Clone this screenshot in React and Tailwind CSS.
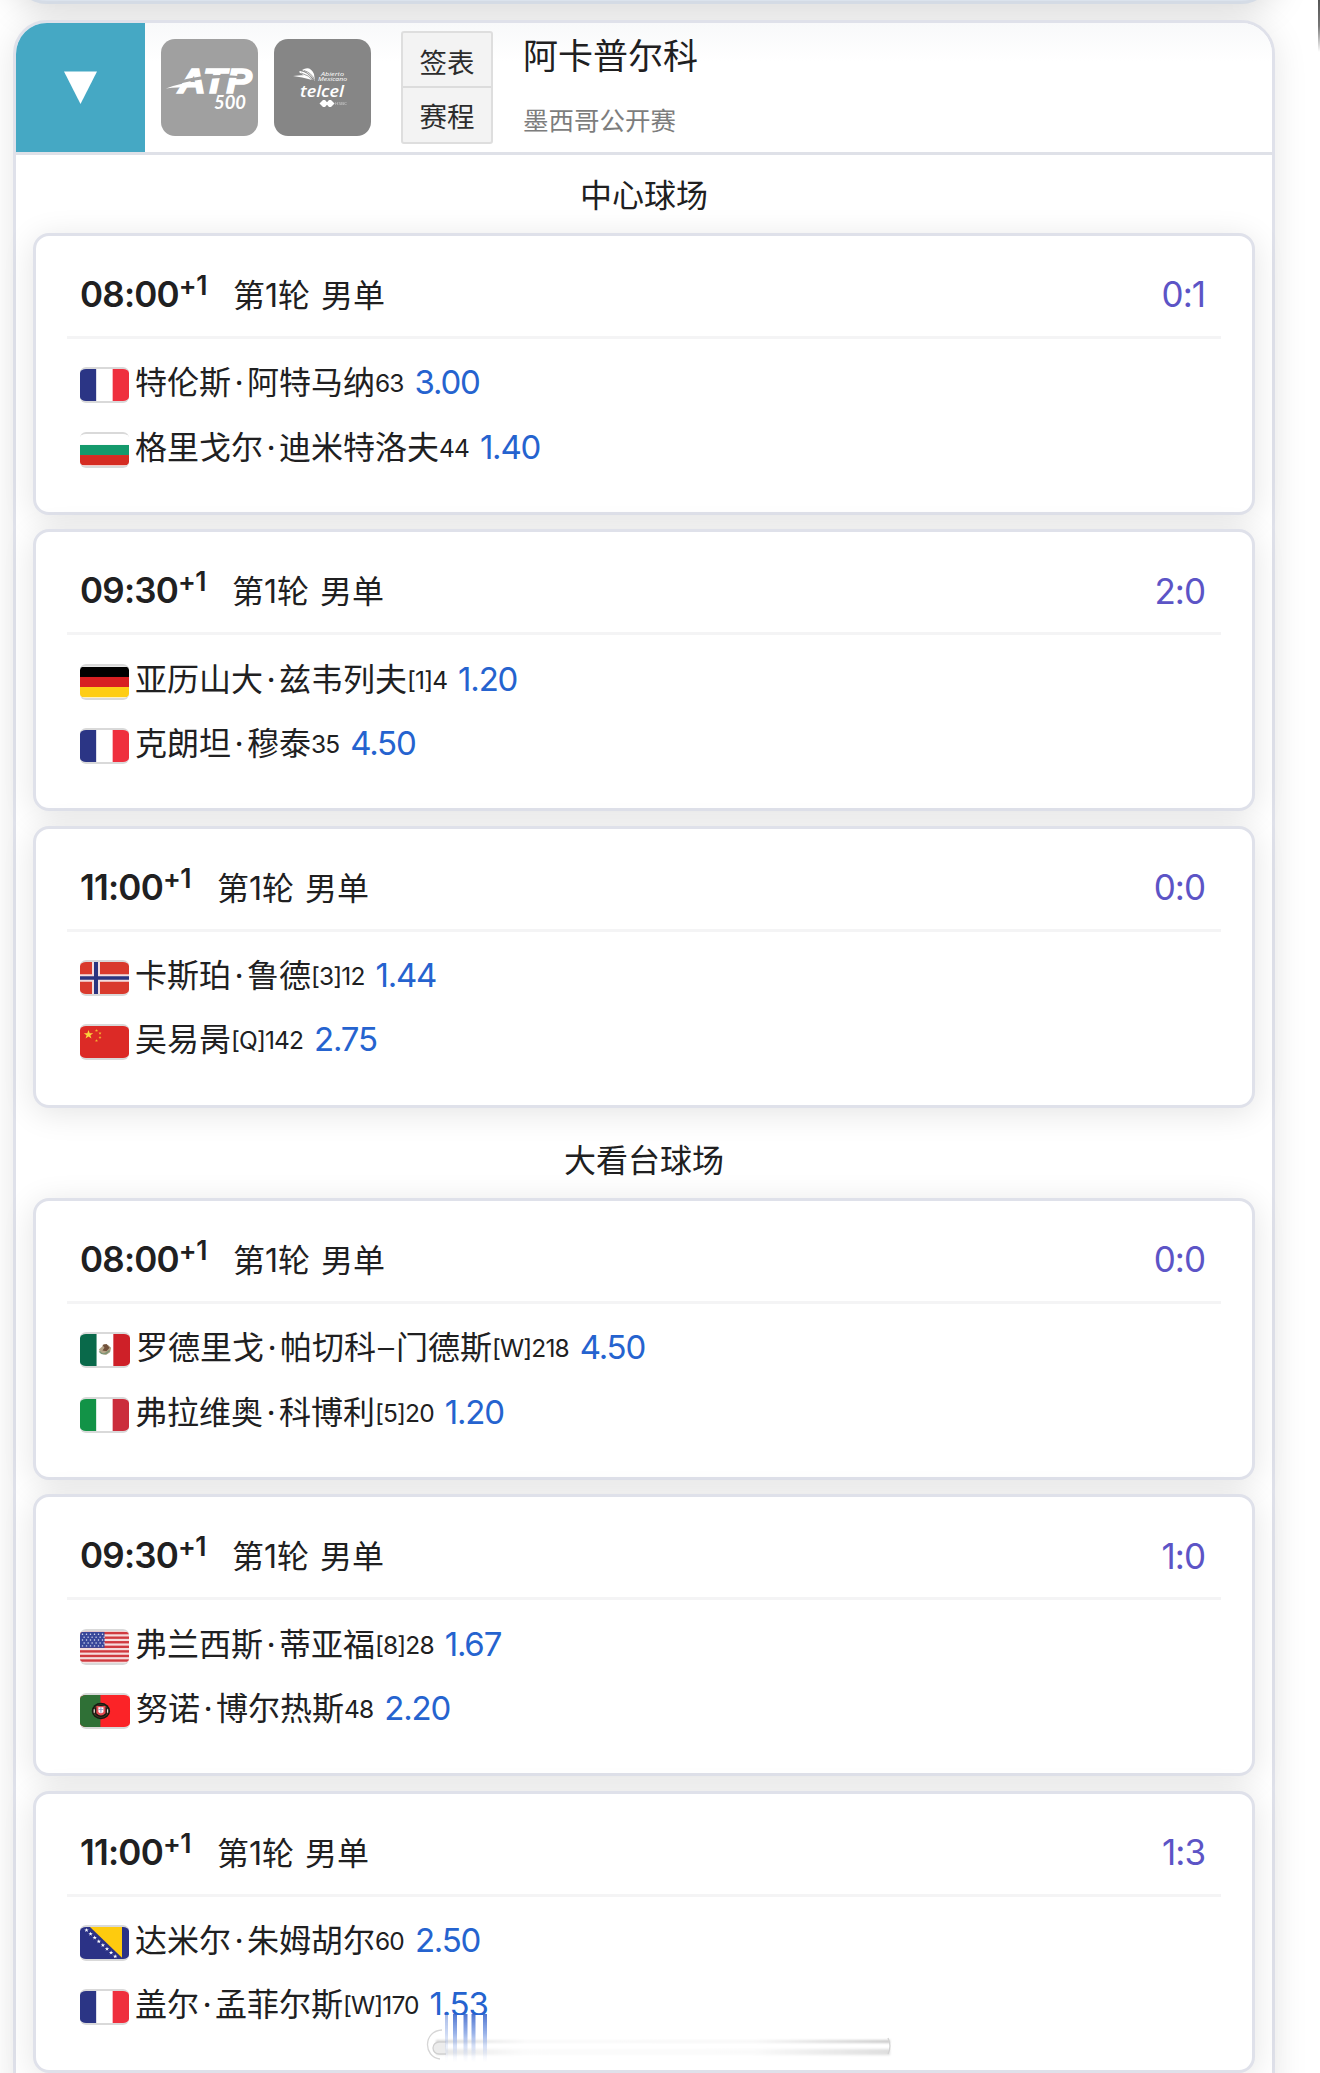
import React from 'react';

const courts = [
  {
    name: '中心球场',
    matches: [
      {
        time: '08:00', score: '0:1',
        players: [
          { flag: 'fr', name: '特伦斯·阿特马纳', rank: '63', odds: '3.00' },
          { flag: 'bg', name: '格里戈尔·迪米特洛夫', rank: '44', odds: '1.40' },
        ],
      },
      {
        time: '09:30', score: '2:0',
        players: [
          { flag: 'de', name: '亚历山大·兹韦列夫', rank: '[1]4', odds: '1.20' },
          { flag: 'fr', name: '克朗坦·穆泰', rank: '35', odds: '4.50' },
        ],
      },
      {
        time: '11:00', score: '0:0',
        players: [
          { flag: 'no', name: '卡斯珀·鲁德', rank: '[3]12', odds: '1.44' },
          { flag: 'cn', name: '吴易昺', rank: '[Q]142', odds: '2.75' },
        ],
      },
    ],
  },
  {
    name: '大看台球场',
    matches: [
      {
        time: '08:00', score: '0:0',
        players: [
          { flag: 'mx', name: '罗德里戈·帕切科–门德斯', rank: '[W]218', odds: '4.50' },
          { flag: 'it', name: '弗拉维奥·科博利', rank: '[5]20', odds: '1.20' },
        ],
      },
      {
        time: '09:30', score: '1:0',
        players: [
          { flag: 'us', name: '弗兰西斯·蒂亚福', rank: '[8]28', odds: '1.67' },
          { flag: 'pt', name: '努诺·博尔热斯', rank: '48', odds: '2.20' },
        ],
      },
      {
        time: '11:00', score: '1:3',
        players: [
          { flag: 'ba', name: '达米尔·朱姆胡尔', rank: '60', odds: '2.50' },
          { flag: 'fr', name: '盖尔·孟菲尔斯', rank: '[W]170', odds: '1.53' },
        ],
      },
    ],
  },
];

const star = '0,-1 0.24,-0.31 0.95,-0.31 0.38,0.12 0.59,0.81 0,0.4 -0.59,0.81 -0.38,0.12 -0.95,-0.31 -0.24,-0.31';

const Star = ({ x, y, r, fill }) => (
  <polygon points={star} fill={fill} transform={`translate(${x} ${y}) scale(${r})`} />
);

const VerticalBands = ({ colors }) => (
  <>
    {colors.map((c, i) => <rect key={i} x={i * 16.33} width="16.5" height="35" fill={c} />)}
  </>
);

const HorizontalBands = ({ colors }) => (
  <>
    {colors.map((c, i) => <rect key={i} y={1 + i * 11} width="49" height="11.2" fill={c} />)}
  </>
);

const flags = {
  fr: <VerticalBands colors={['#2b3585', '#ffffff', '#ef2f3e']} />,
  it: <VerticalBands colors={['#129347', '#ffffff', '#cb2d3c']} />,
  bg: <HorizontalBands colors={['#ffffff', '#149a6c', '#d52c22']} />,
  de: <HorizontalBands colors={['#000000', '#d81f22', '#fecd14']} />,
  mx: (
    <>
      <VerticalBands colors={['#09694a', '#ffffff', '#ce2028']} />
      <path d="M18.5 17l3-3 2-3 4 1 3 3-1 5-4 3-5-2z" fill="#b5a487" />
      <path d="M22 12l4-1 3 4-3 4-4-1 2-3z" fill="#70503a" />
      <path d="M19 19q4 6 10-1" fill="none" stroke="#7c9474" strokeWidth="1.5" />
    </>
  ),
  no: (
    <>
      <rect width="49" height="35" fill="#d93a2d" />
      <path d="M16 0v35M0 17.5h49" stroke="#f3dede" strokeWidth="8" />
      <path d="M16 0v35M0 17.5h49" stroke="#2a3580" strokeWidth="4" />
    </>
  ),
  cn: (
    <>
      <rect width="49" height="35" fill="#dc2a26" />
      <Star x={8.5} y={9.5} r={5} fill="#fbd53c" />
      <Star x={16.5} y={5} r={1.7} fill="#f7b731" />
      <Star x={20} y={8} r={1.7} fill="#f7b731" />
      <Star x={20} y={12.5} r={1.7} fill="#f7b731" />
      <Star x={16.5} y={16} r={1.7} fill="#f7b731" />
    </>
  ),
  us: (
    <>
      <rect width="49" height="35" fill="#f5dddd" />
      {[0, 1, 2, 3, 4, 5, 6].map((i) => (
        <rect key={i} y={1 + i * 5} width="49" height="2.6" fill="#d03a3f" />
      ))}
      <rect y="1" width="24.5" height="17.5" fill="#39479a" />
      {[0, 1, 2, 3, 4].map((row) =>
        [0, 1, 2, 3, 4, 5].map((col) => (
          <circle key={`${row}-${col}`} cx={2.5 + col * 4 + (row % 2) * 1.6} cy={3.5 + row * 3.2} r="0.75" fill="#dfe3f5" />
        ))
      )}
    </>
  ),
  pt: (
    <>
      <rect width="50" height="35" fill="#fb2327" />
      <rect width="20" height="35" fill="#2f7036" />
      <circle cx="20.5" cy="17.5" r="9" fill="#151b12" />
      <circle cx="20.5" cy="17.5" r="7" fill="none" stroke="#4a3a28" />
      <path d="M16 12h9v8q-4.5 5-9 0z" fill="#e24a50" />
      <path d="M18 13.5h5v5q-2.5 3-5 0z" fill="#ffffff" />
      <path d="M20.5 13.5v6M18 16h5" stroke="#8a94c4" />
      <path d="M14 15.5v4M27 15.5v4" stroke="#e8d9d6" strokeWidth="1.2" />
    </>
  ),
  ba: (
    <>
      <rect width="49" height="35" fill="#2b3286" />
      <path d="M10 0H42V33.5z" fill="#fecb0e" />
      {[0, 1, 2, 3, 4, 5, 6, 7].map((i) => (
        <Star key={i} x={6.5 + i * 4.1} y={3.5 + i * 4.1} r={2.3} fill="#ffffff" />
      ))}
    </>
  ),
};

const Flag = ({ code }) => (
  <svg
    viewBox="0 0 49 35"
    preserveAspectRatio="none"
    className={`h-[36px] shrink-0 rounded-[6px] border-y-2 border-black/15 ${code === 'mx' || code === 'pt' ? 'w-[50px]' : 'w-[49px]'}`}
  >
    {flags[code]}
  </svg>
);

const AtpLogo = () => (
  <svg viewBox="0 0 97 97" className="size-[97px] rounded-[14px] bg-[#a0a0a0]">
    <g fill="#ffffff" fontStyle="italic" fontWeight="700">
      <text x="17" y="53.5" fontSize="35" textLength="74" lengthAdjust="spacingAndGlyphs" stroke="#ffffff" strokeWidth="1.5" fontFamily="'Liberation Sans', sans-serif">ATP</text>
      <text x="53" y="70" fontSize="18" textLength="32" lengthAdjust="spacingAndGlyphs" fontFamily="Lato, sans-serif">500</text>
    </g>
    <path d="M5 49.5Q19 44 33 43L31 48Q16 48 5 49.5z" fill="#ffffff" />
    <path d="M19 41.5Q50 33 82 37.5L81 39Q46 37.5 17 45z" fill="#a0a0a0" />
  </svg>
);

const TelcelLogo = () => (
  <svg viewBox="0 0 97 97" className="size-[97px] rounded-[14px] bg-[#868686]">
    <g fill="#ffffff" fontFamily="'Open Sans', sans-serif" fontStyle="italic">
      <text x="47" y="36.5" fontSize="5.8" textLength="23" lengthAdjust="spacingAndGlyphs">Abierto</text>
      <text x="44" y="42" fontSize="5.8" textLength="29" lengthAdjust="spacingAndGlyphs">Mexicano</text>
      <text x="26" y="57.5" fontSize="17" fontWeight="600" textLength="44" lengthAdjust="spacingAndGlyphs">telcel</text>
      <text x="61" y="66" fontSize="4" fontStyle="normal" textLength="12" lengthAdjust="spacingAndGlyphs" opacity="0.6">HSBC</text>
    </g>
    <path d="M28 31Q36 26 40 35L41 42Q36 34 28 31z" fill="#ffffff" />
    <path d="M26 32Q34 33 39 41Q33 39 25 33zM19 37L30 36Q35 38 38 41Q28 38 19 37z" fill="#ffffff" />
    <path d="M30 31.5Q38 34 40.5 41M27 34Q35 36 39.5 42" fill="none" stroke="#868686" strokeWidth="0.8" />
    <path d="M45.5 64.5L49 61H57L60.5 64.5L57 68H49z" fill="#ffffff" />
    <path d="M51 61h4L53 63.3zM51 68h4L53 65.7z" fill="#868686" />
  </svg>
);

// The middle dot and dash get their own widths between the CJK glyphs
const PlayerName = ({ name }) => (
  <span className="flex text-[32px]">
    {name.split(/([·–])/).map((part, i) => {
      if (part === '·') return <span key={i} className="w-4 text-center">·</span>;
      if (part === '–') return <span key={i} className="w-5 text-center font-light">–</span>;
      return <span key={i}>{part}</span>;
    })}
  </span>
);

const PlayerRow = ({ player }) => (
  <div className="flex h-[64.5px] items-center pl-[44px]">
    <Flag code={player.flag} />
    <div className="-mt-[3px] ml-[6px] flex items-baseline whitespace-nowrap leading-[64px]">
      <PlayerName name={player.name} />
      <span className="relative -top-[2px] text-[24.5px] tracking-[-0.9px]">{player.rank}</span>
      <span className="ml-[11px] text-[33px] tracking-[-1.2px] text-[#2563cf]">{player.odds}</span>
    </div>
  </div>
);

const MatchCard = ({ match }) => (
  <div className="h-[282px] rounded-2xl border-[3px] border-[#dfe1ea] bg-white shadow-[0_5px_32px_rgba(0,0,0,0.11)]">
    <div className="mx-[31px] flex h-[103px] items-center justify-between border-b-[3px] border-[#f4f4f5] pr-[16px] pt-[17px] pl-[13px]">
      <div className="flex items-baseline whitespace-nowrap pt-[2px] leading-[60px]">
        <span className="text-[35px] font-semibold tracking-[-0.8px]">{match.time}</span>
        <span className="relative -top-[12px] text-[26.5px] font-semibold tracking-[-0.5px]">+1</span>
        <span className="ml-[26px] text-[32px] [word-spacing:2px]">第1轮 男单</span>
      </div>
      <span className="text-[35px] tracking-[-1px] text-[#5c54c6]">{match.score}</span>
    </div>
    <div className="pt-[14px]">
      {match.players.map((player) => <PlayerRow key={player.name} player={player} />)}
    </div>
  </div>
);

// Smeared strip over the bottom of the last card
const Smudge = () => (
  <svg viewBox="0 0 480 60" className="pointer-events-none absolute left-[422px] top-[2008px] h-[60px] w-[480px]">
    <defs>
      <linearGradient id="streak" x1="0" y1="0" x2="0" y2="1">
        <stop offset="0" stopColor="#3c66cc" stopOpacity="0.9" />
        <stop offset="0.4" stopColor="#7f9fe3" stopOpacity="0.8" />
        <stop offset="1" stopColor="#c9d7f6" stopOpacity="0" />
      </linearGradient>
      <linearGradient id="bar" x1="0" y1="0" x2="1" y2="0">
        <stop offset="0" stopColor="#d6d6d6" />
        <stop offset="0.2" stopColor="#f9f9f9" />
        <stop offset="0.7" stopColor="#f7f7f7" />
        <stop offset="1" stopColor="#c8c8c8" />
      </linearGradient>
      <filter id="soft" x="-20%" y="-20%" width="140%" height="140%">
        <feGaussianBlur stdDeviation="1.1" />
      </filter>
      <filter id="streakSoft" x="-20%" y="-5%" width="140%" height="110%">
        <feGaussianBlur stdDeviation="0.7" />
      </filter>
    </defs>
    <rect x="13" y="7" width="60" height="48" fill="#ffffff" />
    <path d="M20 22C1 23 1 49 18 51" fill="none" stroke="#d6d6d6" strokeWidth="1.3" />
    <g filter="url(#soft)">
      <rect x="14" y="32" width="454" height="3" fill="url(#bar)" />
      <rect x="14" y="41" width="454" height="6" fill="url(#bar)" opacity="0.6" />
    </g>
    <path d="M24 34H17a6 6 0 0 0 0 12H24" fill="#ececec" stroke="#cfcfcf" strokeWidth="1.3" />
    <path d="M466 30q4 8 0 16" fill="none" stroke="#d2d2d2" strokeWidth="1.3" />
    <g fill="url(#streak)" filter="url(#streakSoft)">
      <rect x="23" y="6" width="3" height="48" opacity="0.5" />
      <rect x="31" y="6" width="4" height="48" />
      <rect x="41.5" y="6" width="4" height="48" />
      <rect x="49.5" y="6" width="4" height="48" />
      <rect x="61" y="6" width="4" height="48" />
    </g>
  </svg>
);

const App = () => {
  return (
    <div className="relative h-[2073px] w-[1320px] overflow-hidden bg-white font-[Inter,'Noto_Sans_CJK_SC',sans-serif] text-[#202021]">
      {/* bottom edge of the previous tournament */}
      <div className="mx-[13px] -mt-[200px] h-[204px] w-[1262px] rounded-b-[34px] border-b-[3px] border-[#d6dde7] bg-[#dce4ee] shadow-[0_4px_36px_rgba(0,0,0,0.17)]" />

      <div className="relative mx-[13px] mt-4 h-[2100px] w-[1262px] rounded-[34px] border-[3px] border-[#dfe1ea] bg-white shadow-[0_5px_34px_rgba(0,0,0,0.10)]">
        <div className="flex h-[132px] items-start overflow-hidden rounded-t-[31px] border-b-[3px] border-[#dfe1e8] bg-linear-to-b from-[#f8f9fa] to-white to-30%">
          <button className="flex size-[129px] items-center justify-center bg-[#45a8c4]">
            <svg viewBox="0 0 33 33" className="size-[33px]">
              <path d="M0 0.5H33L16.5 33z" fill="#ffffff" />
            </svg>
          </button>
          <div className="ml-4 mt-4 flex gap-4">
            <AtpLogo />
            <TelcelLogo />
          </div>
          <div className="ml-[30px] mt-[8px] flex w-[92px] flex-col rounded-[3px] border-2 border-[#dedede] bg-[#f3f3f3] text-[27.5px] text-[#2c2c2c]">
            <button className="h-[55px] border-b-2 border-[#dcdcdc] leading-[60px]">签表</button>
            <button className="h-[54px] leading-[59px]">赛程</button>
          </div>
          <div className="ml-[30px] flex flex-col">
            <span className="mt-[1px] text-[35px] leading-[64px]">阿卡普尔科</span>
            <span className="mt-[13px] text-[25.5px] leading-[40px] text-[#7d7d7d]">墨西哥公开赛</span>
          </div>
        </div>

        {courts.map((court) => (
          <section key={court.name}>
            <h2 className="h-[78px] text-center text-[32px] leading-[82px]">{court.name}</h2>
            <div className="mx-[17px] flex flex-col gap-[14.3px] pb-[12.4px]">
              {court.matches.map((match) => <MatchCard key={match.time} match={match} />)}
            </div>
          </section>
        ))}
      </div>

      <Smudge />
      <div className="absolute right-0 top-0 h-[52px] w-[2px] bg-linear-to-b from-[#555555] via-[#777777] to-transparent" />
    </div>
  );
};

export default App;
